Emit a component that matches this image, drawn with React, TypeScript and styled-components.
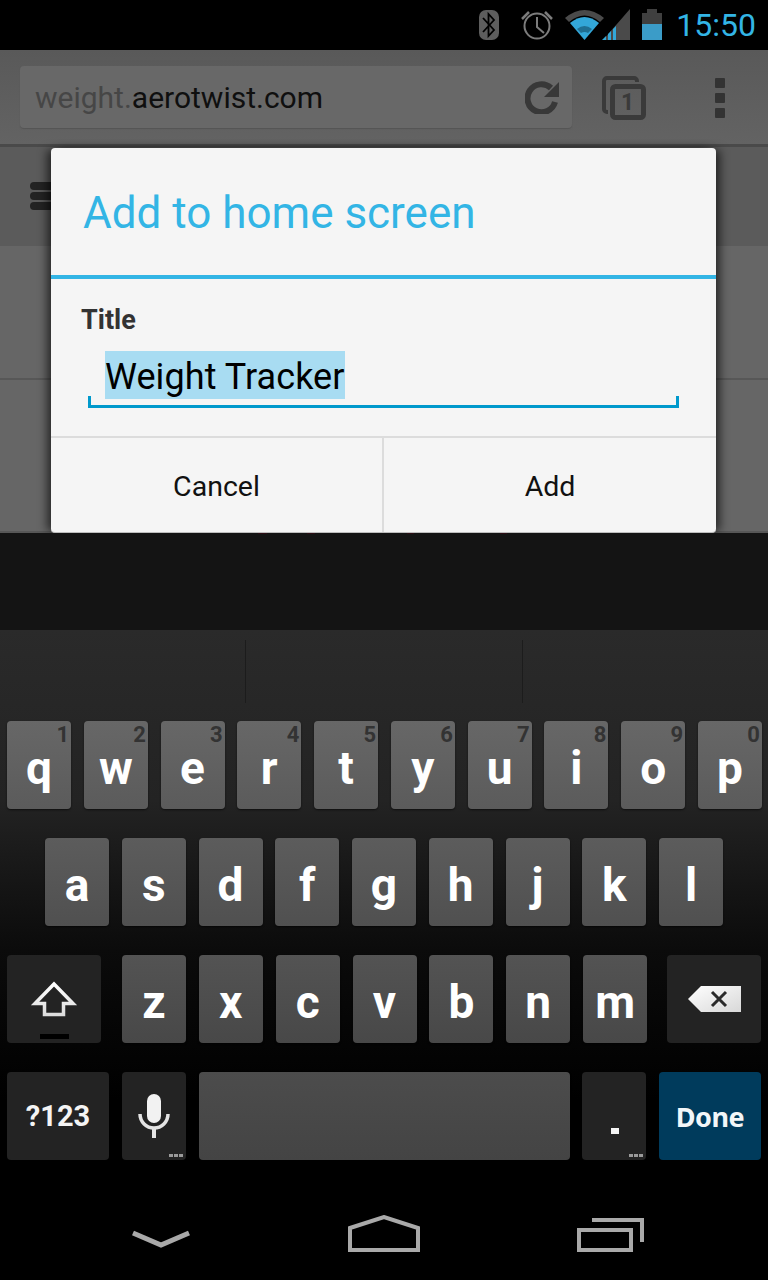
import React from "react";
import styled, { createGlobalStyle } from "styled-components";

const GlobalStyle = createGlobalStyle`
  html, body {
    margin: 0;
    padding: 0;
    background: #000;
    font-family: Roboto, "Liberation Sans", sans-serif;
  }
`;

const ROWS = {
  top: [["q", "1"], ["w", "2"], ["e", "3"], ["r", "4"], ["t", "5"], ["y", "6"], ["u", "7"], ["i", "8"], ["o", "9"], ["p", "0"]],
  middle: ["a", "s", "d", "f", "g", "h", "j", "k", "l"],
  bottom: ["z", "x", "c", "v", "b", "n", "m"],
};

const App: React.FC = () => {
  return (
    <>
      <GlobalStyle />
      <Screen>
        <StatusBar>
          <StatusIcons />
          <Clock>15:50</Clock>
        </StatusBar>

        <Toolbar>
          <UrlBox>
            <Url>
              <UrlFaded>weight.</UrlFaded>aerotwist.com
            </Url>
            <RefreshIcon />
          </UrlBox>
          <TabsIcon />
          <MenuDots>
            <i />
            <i />
            <i />
          </MenuDots>
        </Toolbar>

        <PageHeader>
          <Burger>
            <i />
            <i />
            <i />
          </Burger>
        </PageHeader>
        <PageRow $h={134} />
        <PageRow $h={153} />

        <Dialog>
          <DialogTitle>Add to home screen</DialogTitle>
          <DialogBody>
            <FieldLabel>Title</FieldLabel>
            <Field>
              <Selected>Weight Tracker</Selected>
            </Field>
          </DialogBody>
          <DialogActions>
            <ActionButton>Cancel</ActionButton>
            <ActionButton>Add</ActionButton>
          </DialogActions>
        </Dialog>

        <DarkGap>
          <PeekMark $x={258} $w={9} />
          <PeekMark $x={307} $w={8} />
          <PeekMark $x={407} $w={7} />
          <PeekMark $x={500} $w={7} />
        </DarkGap>

        <Keyboard>
          <Suggestions>
            <SuggestionCell />
            <SuggestionCell $divider />
            <SuggestionCell $divider />
          </Suggestions>
          <Rows>
            <KeyRow $bg="linear-gradient(#676767, #5b5b5b)">
              {ROWS.top.map(([letter, hint]) => (
                <Key key={letter}>
                  <Hint>{hint}</Hint>
                  {letter}
                </Key>
              ))}
            </KeyRow>
            <KeyRow $inset={45} $bg="linear-gradient(#5c5c5c, #505050)">
              {ROWS.middle.map((letter) => (
                <Key key={letter}>{letter}</Key>
              ))}
            </KeyRow>
            <KeyRow $right={7} $bg="linear-gradient(#535353, #484848)">
              <DarkKey $w={94} $after={8}>
                <ShiftIcon />
                <ShiftBar />
              </DarkKey>
              {ROWS.bottom.map((letter) => (
                <Key key={letter}>{letter}</Key>
              ))}
              <DarkKey $w={94} $before={7}>
                <BackspaceIcon />
              </DarkKey>
            </KeyRow>
            <KeyRow $right={7} $bg="linear-gradient(#4c4c4c, #444444)">
              <DarkKey $w={102} $small>
                ?123
              </DarkKey>
              <DarkKey $w={64}>
                <MicIcon />
                <MoreDots />
              </DarkKey>
              <Key $w={371} />
              <DarkKey $w={64}>
                <Period />
                <MoreDots />
              </DarkKey>
              <DoneKey>Done</DoneKey>
            </KeyRow>
          </Rows>
        </Keyboard>

        <NavBar>
          <svg width="58" height="40" viewBox="0 0 58 40">
            <path d="M1 18 L29 30 L57 18" fill="none" stroke="#a9a9a9" strokeWidth="5" />
          </svg>
          <svg width="72" height="40" viewBox="0 0 72 40">
            <path d="M2 13 L36 2 L70 13 V35 H2 Z" fill="none" stroke="#a9a9a9" strokeWidth="4" />
          </svg>
          <svg width="67" height="40" viewBox="0 0 67 40">
            <path d="M15 5 H65 V27" fill="none" stroke="#a9a9a9" strokeWidth="4" />
            <rect x="2" y="15" width="52" height="20" fill="none" stroke="#a9a9a9" strokeWidth="4" />
          </svg>
        </NavBar>
      </Screen>
    </>
  );
};

export default App;

const StatusIcons = () => (
  <svg width="191" height="50" viewBox="479 0 191 50">
    <rect x="479" y="10" width="20" height="30" rx="7" fill="#5e5e5e" />
    <path d="M483 18 L494 30 L488.5 36 V14 L494 20 L483 32" fill="none" stroke="#000" strokeWidth="1.8" />
    <circle cx="537" cy="26" r="12.5" fill="none" stroke="#7c7c7c" strokeWidth="2" />
    <path d="M537 17 V27 L544 33" fill="none" stroke="#7c7c7c" strokeWidth="2" />
    <path d="M522 19 L529 12 M552 19 L545 12" stroke="#7c7c7c" strokeWidth="2.5" />
    <path d="M565 18 Q584.5 2 604 18 L600 22 Q584.5 9 569 22 Z" fill="#4a4a4a" />
    <path d="M570 23 Q584.5 11 599 23 L584.5 40 Z" fill="#33a7d8" />
    <path d="M577 29 Q584.5 23 592 29 L588 33 Q584.5 31 581 33 Z" fill="#1f6f92" />
    <path d="M630 9 V40 H603 Z" fill="#4a4a4a" />
    <path d="M602 40 L606 36 V40 Z M608 40 V34 L611 31 V40 Z M613 40 V29 L616 26 V40 Z" fill="#33a7d8" />
    <rect x="647" y="9" width="10" height="4" fill="#3f3f3f" />
    <rect x="642" y="13" width="20" height="11" fill="#3f3f3f" />
    <rect x="642" y="24" width="20" height="16" fill="#3b9cc8" />
  </svg>
);

const RefreshIcon = () => (
  <svg width="35" height="34" viewBox="0 0 35 34">
    <path d="M26 8 A14 14 0 1 0 30 22" fill="none" stroke="#383838" strokeWidth="6" />
    <path d="M34 2 V17 H19 Z" fill="#383838" />
  </svg>
);

const TabsIcon = () => (
  <TabsWrap>
    <svg width="44" height="44" viewBox="0 0 44 44">
      <path d="M6 36 H5 A3 3 0 0 1 2 33 V5 A3 3 0 0 1 5 2 H32 A3 3 0 0 1 35 5 V6" fill="none" stroke="#3a3a3a" strokeWidth="4" />
      <rect x="10.5" y="10.5" width="31" height="31" rx="3" fill="none" stroke="#3a3a3a" strokeWidth="5" />
    </svg>
    <TabCount>1</TabCount>
  </TabsWrap>
);

const ShiftIcon = () => (
  <svg width="48" height="36" viewBox="0 0 48 36">
    <defs>
      <linearGradient id="shiftFill" x1="0" y1="0" x2="0" y2="1">
        <stop offset="0" stopColor="#fff" />
        <stop offset="1" stopColor="#ddd" />
      </linearGradient>
    </defs>
    <path d="M24 3 L43 22.5 H33.5 V33.5 H14.5 V22.5 H5 Z" fill="none" stroke="url(#shiftFill)" strokeWidth="3.5" />
  </svg>
);

const BackspaceIcon = () => (
  <svg width="53" height="26" viewBox="0 0 53 26">
    <defs>
      <linearGradient id="backFill" x1="0" y1="0" x2="1" y2="1">
        <stop offset="0" stopColor="#fff" />
        <stop offset="1" stopColor="#d8d8d8" />
      </linearGradient>
    </defs>
    <path d="M0 13 L13 0 H53 V26 H13 Z" fill="url(#backFill)" />
    <path d="M24 6 L38 20 M38 6 L24 20" stroke="#2a2a2a" strokeWidth="3" />
  </svg>
);

const MicIcon = () => (
  <svg width="32" height="44" viewBox="0 0 32 44">
    <rect x="9" y="0" width="14" height="29" rx="7" fill="#f2f2f2" />
    <path d="M2 20 A14 14 0 0 0 30 20" fill="none" stroke="#e4e4e4" strokeWidth="3.5" />
    <rect x="14" y="33" width="4" height="11" fill="#e4e4e4" />
  </svg>
);

const Screen = styled.div`
  position: relative;
  width: 768px;
  height: 1280px;
  overflow: hidden;
  background: #000;
`;

const StatusBar = styled.div`
  height: 50px;
  background: #000;
  display: flex;
  align-items: center;
  justify-content: flex-end;
  padding-right: 12px;
`;

const Clock = styled.span`
  width: 86px;
  text-align: right;
  font-size: 32px;
  font-weight: 400;
  color: #33b5e5;
`;

const Toolbar = styled.div`
  height: 97px;
  box-sizing: border-box;
  padding: 16px 0 0 20px;
  background: linear-gradient(#595959, #636363);
  border-bottom: 3px solid #4a4a4a;
  display: flex;
  align-items: flex-start;
`;

const UrlBox = styled.div`
  width: 552px;
  height: 62px;
  box-sizing: border-box;
  padding: 0 12px 0 15px;
  background: #686868;
  border-radius: 4px;
  box-shadow: 0 1px 1px #555;
  display: flex;
  align-items: center;
  justify-content: space-between;
`;

const Url = styled.span`
  font-size: 30px;
  color: #0f0f0f;
`;

const UrlFaded = styled.span`
  color: #464646;
`;

const TabsWrap = styled.div`
  position: relative;
  width: 44px;
  height: 44px;
  margin: 10px 0 0 30px;
`;

const TabCount = styled.span`
  position: absolute;
  left: 10px;
  top: 10px;
  width: 31px;
  line-height: 33px;
  text-align: center;
  font-size: 23px;
  font-weight: 700;
  color: #3a3a3a;
`;

const MenuDots = styled.div`
  margin: 12px 0 0 69px;
  display: flex;
  flex-direction: column;
  gap: 5px;

  i {
    display: block;
    width: 10px;
    height: 10px;
    border-radius: 1px;
    background: #333;
  }
`;

const PageHeader = styled.div`
  height: 99px;
  box-sizing: border-box;
  padding: 35px 0 0 30px;
  background: #5b5b5b;
`;

const Burger = styled.div`
  width: 60px;
  display: flex;
  flex-direction: column;
  gap: 2px;

  i {
    display: block;
    height: 8px;
    border-radius: 4px;
    background: #232323;
  }
`;

const PageRow = styled.div<{ $h: number }>`
  height: ${({ $h }) => $h}px;
  box-sizing: border-box;
  background: #666;
  border-bottom: 2px solid #575757;

  &:last-of-type {
    border-bottom: none;
  }
`;

const Dialog = styled.div`
  position: absolute;
  left: 51px;
  top: 148px;
  width: 665px;
  height: 385px;
  background: #f5f5f5;
  border-radius: 4px;
  box-shadow: -6px 0 10px -2px rgba(0, 0, 0, 0.6), 6px 0 10px -2px rgba(0, 0, 0, 0.6);
  border-bottom: 1px solid #bdbdbd;
  box-sizing: border-box;
`;

const DialogTitle = styled.div`
  height: 131px;
  box-sizing: border-box;
  padding: 36px 0 0 32px;
  border-bottom: 4px solid #33b5e5;
  font-size: 44px;
  line-height: 58px;
  color: #33b5e5;
`;

const DialogBody = styled.div`
  height: 157px;
  box-sizing: border-box;
  padding: 25px 37px 0 30px;
`;

const FieldLabel = styled.div`
  font-size: 27px;
  line-height: 32px;
  font-weight: 700;
  color: #333;
`;

const Field = styled.div`
  position: relative;
  margin: 15px 0 0 7px;
  width: 591px;
  height: 57px;
  box-sizing: border-box;
  padding-left: 17px;
  border-bottom: 3px solid #0099cc;

  &::before,
  &::after {
    content: "";
    position: absolute;
    bottom: 0;
    width: 3px;
    height: 9px;
    background: #0099cc;
  }
  &::before {
    left: 0;
  }
  &::after {
    right: 0;
  }
`;

const Selected = styled.span`
  display: inline-block;
  height: 48px;
  line-height: 52px;
  font-size: 36px;
  letter-spacing: 0.07px;
  color: #000;
  background: #a8dcf2;
`;

const DialogActions = styled.div`
  height: 96px;
  display: grid;
  grid-template-columns: 331px 1fr;
  border-top: 2px solid #dcdcdc;
  box-sizing: border-box;
`;

const ActionButton = styled.div`
  display: flex;
  align-items: center;
  justify-content: center;
  padding-top: 3px;
  font-size: 28.5px;
  color: #111;

  & + & {
    border-left: 2px solid #dcdcdc;
  }
`;

const DarkGap = styled.div`
  position: relative;
  height: 97px;
  background: #141414;
`;

const PeekMark = styled.span<{ $x: number; $w: number }>`
  position: absolute;
  top: 0;
  left: ${({ $x }) => $x}px;
  width: ${({ $w }) => $w}px;
  height: 1px;
  background: #2c0d14;
`;

const Keyboard = styled.div`
  height: 550px;
  background: linear-gradient(#2a2a2a 0, #232323 170px, #161616 250px, #0b0b0b 320px, #000 470px);
`;

const Suggestions = styled.div`
  height: 75px;
  display: grid;
  grid-template-columns: 245px 277px 246px;
`;

const SuggestionCell = styled.div<{ $divider?: boolean }>`
  margin-top: 10px;
  height: 63px;
  border-left: ${({ $divider }) => ($divider ? "1px solid #1c1c1c" : "none")};
`;

const Rows = styled.div`
  padding-top: 16px;
  display: flex;
  flex-direction: column;
  gap: 29px;
`;

const KeyRow = styled.div<{ $inset?: number; $right?: number; $bg: string }>`
  --key-bg: ${({ $bg }) => $bg};
  height: 88px;
  box-sizing: border-box;
  padding: 0 ${({ $inset, $right }) => $inset ?? $right ?? 6}px 0 ${({ $inset }) => $inset ?? 7}px;
  display: flex;
  justify-content: space-between;
`;

const Key = styled.div<{ $w?: number }>`
  position: relative;
  width: ${({ $w }) => $w ?? 64}px;
  height: 88px;
  padding-top: 6px;
  box-sizing: border-box;
  background: var(--key-bg);
  border-radius: 4px;
  box-shadow: 0 1px 2px rgba(0, 0, 0, 0.6);
  display: flex;
  align-items: center;
  justify-content: center;
  font-size: 46px;
  font-weight: 700;
  color: #fff;
`;

const Hint = styled.span`
  position: absolute;
  top: 1px;
  right: 2px;
  font-size: 22px;
  line-height: 26px;
  font-weight: 700;
  color: #333;
`;

const DarkKey = styled.div<{ $w: number; $small?: boolean; $after?: number; $before?: number }>`
  position: relative;
  width: ${({ $w }) => $w}px;
  height: 88px;
  margin-right: ${({ $after }) => $after ?? 0}px;
  margin-left: ${({ $before }) => $before ?? 0}px;
  background: #232323;
  border-radius: 4px;
  display: flex;
  align-items: center;
  justify-content: center;
  font-size: ${({ $small }) => ($small ? 29 : 46)}px;
  font-weight: 700;
  color: #f4f4f4;
`;

const DoneKey = styled.div`
  width: 102px;
  height: 88px;
  background: #003b5c;
  border-radius: 4px;
  display: flex;
  align-items: center;
  justify-content: center;
  font-family: "Noto Sans", sans-serif;
  font-size: 27px;
  letter-spacing: -0.5px;
  font-weight: 700;
  color: #f2f6f8;
`;

const ShiftBar = styled.span`
  position: absolute;
  left: 33px;
  bottom: 4px;
  width: 29px;
  height: 5px;
  background: #000;
`;

const MoreDots = styled.span`
  position: absolute;
  right: 3px;
  bottom: 3px;
  width: 14px;
  height: 3px;
  background: repeating-linear-gradient(90deg, #9a9a9a 0 4px, transparent 4px 5px);
`;

const Period = styled.span`
  position: absolute;
  left: 29px;
  top: 56px;
  width: 8px;
  height: 6px;
  background: #f4f4f4;
`;

const NavBar = styled.div`
  height: 100px;
  box-sizing: border-box;
  padding: 35px 0 0 132px;
  background: #000;
  display: flex;
  align-items: flex-start;
  gap: 157.5px;
`;
